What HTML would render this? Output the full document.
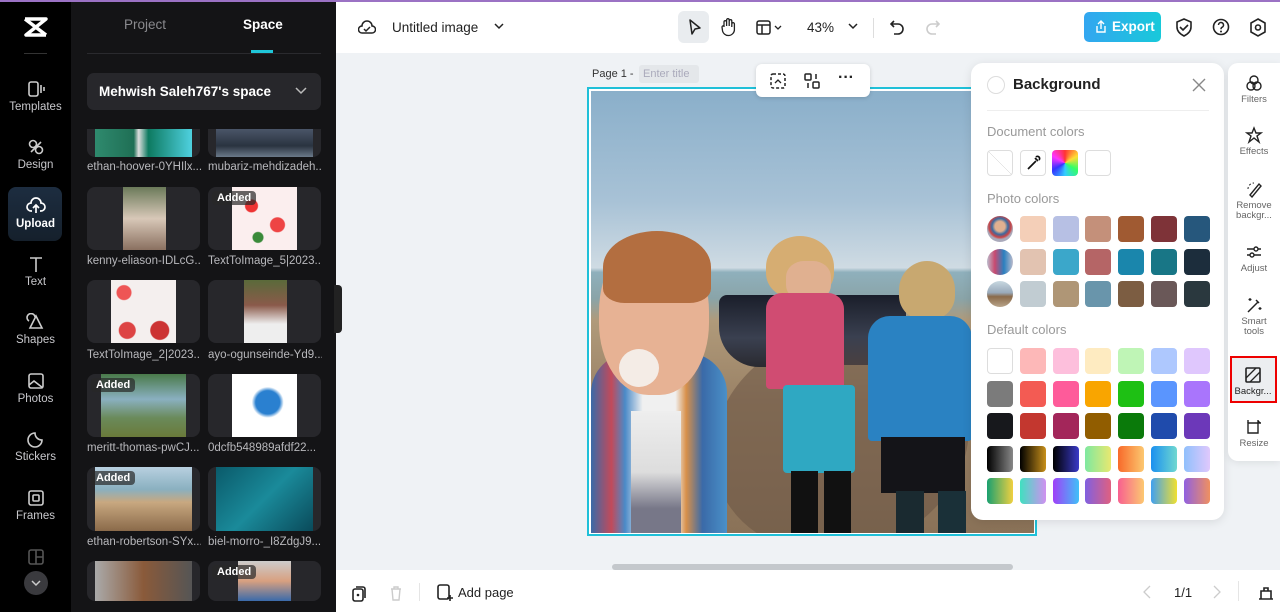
<!DOCTYPE html>
<html><head><meta charset="utf-8"><style>
*{box-sizing:border-box;margin:0;padding:0}
body{width:1280px;height:612px;overflow:hidden;font-family:"Liberation Sans",sans-serif;background:#eff2f5;position:relative}
.abs{position:absolute}
.rail{left:0;top:0;width:71px;height:612px;background:#000}
.ri{position:absolute;left:0;width:71px;text-align:center;color:#c8c8cc;font-size:11.5px}
.ri svg{display:block;margin:0 auto 3px}
.panel{left:71px;top:0;width:265px;height:612px;background:#141416}
.card{position:absolute;background:#27272b;border-radius:8px;overflow:hidden}
.card .im{position:absolute;top:0;bottom:0}
.lbl{position:absolute;color:#b8b8bc;font-size:11.5px;white-space:nowrap;width:114px;overflow:hidden}
.added{position:absolute;left:4px;top:4px;background:rgba(40,40,40,.7);color:#fff;font-weight:bold;font-size:11px;padding:1px 5px;border-radius:4px}
.top{left:336px;top:2px;width:944px;height:51px;background:#fff}
.sw{position:absolute;width:26px;height:26px;border-radius:4px}
.side{position:absolute;font-size:9.5px;color:#666;text-align:center;width:50px;left:1229px;line-height:10px}
.side svg{display:block;margin:0 auto 3px}
.p{position:absolute}
</style></head><body>
<div class="abs" style="left:0;top:0;width:1280px;height:2px;background:#9b72c4;z-index:5"></div>

<div class="abs rail">
 <svg class="abs" style="left:23px;top:17px" width="25" height="20" viewBox="0 0 25 20"><path d="M2 2h21L3 18h20" fill="none" stroke="#fff" stroke-width="3.5" stroke-linejoin="round"/><path d="M2 2l21 16" stroke="#fff" stroke-width="3.5"/></svg>
 <div class="abs" style="left:24px;top:53px;width:23px;height:1px;background:#333"></div>
 <div class="ri" style="top:80px"><svg width="20" height="18"><rect x="3" y="2" width="9" height="14" rx="2" fill="none" stroke="#ccc" stroke-width="1.6"/><path d="M15 5v8M18 7v4" stroke="#ccc" stroke-width="1.6"/></svg>Templates</div>
 <div class="ri" style="top:138px"><svg width="20" height="18"><circle cx="7" cy="6" r="3.5" fill="none" stroke="#ccc" stroke-width="1.6"/><circle cx="13" cy="12" r="3.5" fill="none" stroke="#ccc" stroke-width="1.6"/><path d="M5 14l10-10" stroke="#ccc" stroke-width="1.6"/></svg>Design</div>
 <div class="abs" style="left:8px;top:187px;width:54px;height:54px;border-radius:8px;background:linear-gradient(#1d2d40,#15202c)"></div>
 <div class="ri" style="top:197px;color:#fff;font-weight:bold"><svg width="20" height="18"><path d="M6 14H5a4 4 0 0 1 0-8 5 5 0 0 1 10 0 4 4 0 0 1 0 8h-1M10 16V9M7 11l3-3 3 3" fill="none" stroke="#fff" stroke-width="1.7"/></svg>Upload</div>
 <div class="ri" style="top:255px"><svg width="20" height="18"><path d="M4 3h12M10 3v14" stroke="#ccc" stroke-width="1.6"/></svg>Text</div>
 <div class="ri" style="top:313px"><svg width="20" height="18"><path d="M10 3l6 12H4z M3 8a4 4 0 1 1 6-4" fill="none" stroke="#ccc" stroke-width="1.6"/></svg>Shapes</div>
 <div class="ri" style="top:372px"><svg width="20" height="18"><rect x="3" y="2" width="14" height="14" rx="2" fill="none" stroke="#ccc" stroke-width="1.6"/><path d="M3 13l5-4 9 7" fill="none" stroke="#ccc" stroke-width="1.6"/></svg>Photos</div>
 <div class="ri" style="top:430px"><svg width="20" height="18"><path d="M16 10a7 7 0 1 1-7-7c0 4 3 7 7 7z" fill="none" stroke="#ccc" stroke-width="1.6"/></svg>Stickers</div>
 <div class="ri" style="top:489px"><svg width="20" height="18"><rect x="3" y="2" width="14" height="14" rx="2" fill="none" stroke="#ccc" stroke-width="1.6"/><rect x="7" y="6" width="6" height="6" rx="1" fill="none" stroke="#ccc" stroke-width="1.6"/></svg>Frames</div>
 <div class="ri" style="top:548px;color:#555"><svg width="20" height="18"><rect x="3" y="2" width="14" height="14" rx="2" fill="none" stroke="#555" stroke-width="1.6"/><path d="M10 2v14M10 9h7" stroke="#555" stroke-width="1.6"/></svg></div>
 <div class="abs" style="left:24px;top:571px;width:24px;height:24px;border-radius:50%;background:#3a3a3e;text-align:center"><svg width="12" height="24"><path d="M2 10l4 4 4-4" fill="none" stroke="#ccc" stroke-width="1.5"/></svg></div>
</div>

<div class="abs panel">
 <div class="abs" style="left:53px;top:17px;color:#8a8a8e;font-size:13.5px">Project</div>
 <div class="abs" style="left:172px;top:17px;color:#fff;font-size:13.5px;font-weight:bold">Space</div>
 <div class="abs" style="left:16px;top:53px;width:234px;height:1px;background:#2a2a2e"></div>
 <div class="abs" style="left:180px;top:50px;width:22px;height:3px;background:#1fc6d8"></div>
 <div class="abs" style="left:16px;top:73px;width:234px;height:37px;background:#27272b;border-radius:7px;color:#fff;font-weight:bold;font-size:13.5px;padding:11px 12px">Mehwish Saleh767's space<svg style="position:absolute;right:14px;top:14px" width="12" height="8"><path d="M1 1l5 5 5-5" fill="none" stroke="#bbb" stroke-width="1.5"/></svg></div>
</div>
<div class="card" style="left:87px;top:129px;width:113px;height:28px;border-radius:0 0 8px 8px"><div class="im" style="left:8px;width:97px;background:linear-gradient(90deg,#2f8a6e,#1f6f55 40%,#ddd 45%,#0d7a60 55%,#4fd1e0)"></div></div>
<div class="card" style="left:208px;top:129px;width:113px;height:28px;border-radius:0 0 8px 8px"><div class="im" style="left:8px;width:97px;background:linear-gradient(#4a5568,#2a3340 60%,#6b7a8a)"></div></div>
<div class="lbl" style="left:87px;top:161px">ethan-hoover-0YHIlx...</div>
<div class="lbl" style="left:208px;top:161px">mubariz-mehdizadeh...</div>
<div class="card" style="left:87px;top:187px;width:113px;height:63px"><div class="im" style="left:36px;width:43px;background:linear-gradient(#6b7a5a,#d8c8b8 50%,#8a7060)"></div></div>
<div class="card" style="left:208px;top:187px;width:113px;height:63px"><div class="im" style="left:24px;width:65px;background:radial-gradient(circle at 30% 30%,#e33 6px,transparent 7px),radial-gradient(circle at 70% 60%,#e44 7px,transparent 8px),radial-gradient(circle at 40% 80%,#3a8a3a 5px,transparent 6px),#fbeeee"></div><div class="added">Added</div></div>
<div class="lbl" style="left:87px;top:255px">kenny-eliason-IDLcG...</div>
<div class="lbl" style="left:208px;top:255px">TextToImage_5|2023...</div>
<div class="card" style="left:87px;top:280px;width:113px;height:63px"><div class="im" style="left:24px;width:65px;background:radial-gradient(circle at 20% 20%,#e55 7px,transparent 8px),radial-gradient(circle at 75% 80%,#c33 9px,transparent 10px),radial-gradient(circle at 25% 80%,#d44 8px,transparent 9px),#f4efee"></div></div>
<div class="card" style="left:208px;top:280px;width:113px;height:63px"><div class="im" style="left:36px;width:43px;background:linear-gradient(#5a6a3a,#8a5a4a 40%,#eee 70%)"></div></div>
<div class="lbl" style="left:87px;top:349px">TextToImage_2|2023...</div>
<div class="lbl" style="left:208px;top:349px">ayo-ogunseinde-Yd9...</div>
<div class="card" style="left:87px;top:374px;width:113px;height:63px"><div class="im" style="left:14px;width:85px;background:linear-gradient(#4a7a4a,#8ab0c0 40%,#6a8a5a 70%,#6a7a3a)"></div><div class="added">Added</div></div>
<div class="card" style="left:208px;top:374px;width:113px;height:63px"><div class="im" style="left:24px;width:65px;background:radial-gradient(ellipse at 55% 45%,#2a80d0 12px,transparent 16px),#fff"></div></div>
<div class="lbl" style="left:87px;top:442px">meritt-thomas-pwCJ...</div>
<div class="lbl" style="left:208px;top:442px">0dcfb548989afdf22...</div>
<div class="card" style="left:87px;top:467px;width:113px;height:64px"><div class="im" style="left:8px;width:97px;background:linear-gradient(#b8d0e0,#8ab0c0 35%,#c8a880 55%,#8a6a4a)"></div><div class="added">Added</div></div>
<div class="card" style="left:208px;top:467px;width:113px;height:64px"><div class="im" style="left:8px;width:97px;background:linear-gradient(135deg,#0a5a6a,#1a8a9a 50%,#0a4a5a)"></div></div>
<div class="lbl" style="left:87px;top:536px">ethan-robertson-SYx...</div>
<div class="lbl" style="left:208px;top:536px">biel-morro-_I8ZdgJ9...</div>
<div class="card" style="left:87px;top:561px;width:113px;height:40px"><div class="im" style="left:8px;width:97px;background:linear-gradient(90deg,#aaa,#8a5a3a 50%,#555)"></div></div>
<div class="card" style="left:208px;top:561px;width:113px;height:40px"><div class="im" style="left:30px;width:53px;background:linear-gradient(#ccc,#d8a080 50%,#3a6aaa)"></div><div class="added">Added</div></div>
<div class="abs" style="left:334px;top:285px;width:8px;height:48px;background:#222;border-radius:0 4px 4px 0"></div>

<div class="abs top">
 <svg class="abs" style="left:22px;top:17px" width="18" height="16"><path d="M4 14a3.5 3.5 0 0 1 0-7 5 5 0 0 1 10 0 3.5 3.5 0 0 1 0 7z" fill="none" stroke="#222" stroke-width="1.5"/><path d="M6 10l2 2 4-4" fill="none" stroke="#222" stroke-width="1.5"/></svg>
 <div class="abs" style="left:56px;top:18px;font-size:13.5px;color:#222">Untitled image</div>
 <svg class="abs" style="left:158px;top:21px" width="10" height="7"><path d="M1 1l4 4 4-4" fill="none" stroke="#222" stroke-width="1.5"/></svg>
 <div class="abs" style="left:342px;top:9px;width:31px;height:32px;background:#e9ecef;border-radius:6px"></div>
 <svg class="abs" style="left:349px;top:15px" width="18" height="20"><path d="M5 3l10 8-5 1-3 5z" fill="none" stroke="#222" stroke-width="1.5" stroke-linejoin="round"/></svg>
 <svg class="abs" style="left:383px;top:15px" width="18" height="20"><path d="M5 10V5a1.3 1.3 0 0 1 2.6 0v4V3a1.3 1.3 0 0 1 2.6 0v6V4a1.3 1.3 0 0 1 2.6 0v6V7a1.3 1.3 0 0 1 2.6 0v5a6 6 0 0 1-12 1L3 10a1.3 1.3 0 0 1 2-1z" fill="none" stroke="#222" stroke-width="1.3"/></svg>
 <svg class="abs" style="left:420px;top:18px" width="30" height="16"><rect x="1" y="1" width="13" height="13" rx="2" fill="none" stroke="#222" stroke-width="1.5"/><path d="M1 5h13M6 5v9" stroke="#222" stroke-width="1.5"/><path d="M19 6l3 3 3-3" fill="none" stroke="#222" stroke-width="1.3"/></svg>
 <div class="abs" style="left:471px;top:18px;font-size:13.5px;color:#222">43%</div>
 <svg class="abs" style="left:512px;top:21px" width="10" height="7"><path d="M1 1l4 4 4-4" fill="none" stroke="#222" stroke-width="1.5"/></svg>
 <div class="abs" style="left:537px;top:16px;width:1px;height:20px;background:#ddd"></div>
 <svg class="abs" style="left:554px;top:17px" width="16" height="17"><path d="M4 2L1 5l3 3M1 5h7a5 5 0 0 1 0 10H4" fill="none" stroke="#222" stroke-width="1.6"/></svg>
 <svg class="abs" style="left:588px;top:17px" width="16" height="17"><path d="M12 2l3 3-3 3M15 5H8a5 5 0 0 0 0 10h4" fill="none" stroke="#ccc" stroke-width="1.6"/></svg>
 <div class="abs" style="left:748px;top:10px;width:77px;height:30px;border-radius:5px;background:linear-gradient(90deg,#33a6f0,#18c9da);color:#fff;font-weight:bold;font-size:13.5px;padding:7px 0 0 28px">Export</div>
 <svg class="abs" style="left:758px;top:18px" width="14" height="14"><path d="M3 6v6h8V6M7 9V1M4 4l3-3 3 3" fill="none" stroke="#fff" stroke-width="1.4"/></svg>
 <svg class="abs" style="left:839px;top:16px" width="18" height="19"><path d="M9 1l7 3v5c0 4-3 7-7 9-4-2-7-5-7-9V4z M5 9l3 3 5-5" fill="none" stroke="#222" stroke-width="1.6"/></svg>
 <svg class="abs" style="left:876px;top:16px" width="18" height="18"><circle cx="9" cy="9" r="7.5" fill="none" stroke="#222" stroke-width="1.6"/><path d="M6.5 7a2.5 2.5 0 1 1 3.5 2.3c-1 .4-1 1-1 2" fill="none" stroke="#222" stroke-width="1.5"/><circle cx="9" cy="13.5" r="1" fill="#222"/></svg>
 <svg class="abs" style="left:913px;top:16px" width="18" height="19"><path d="M9 1l7 4v9l-7 4-7-4V5z" fill="none" stroke="#222" stroke-width="1.6"/><circle cx="9" cy="9.5" r="2.5" fill="none" stroke="#222" stroke-width="1.6"/></svg>
</div>

<div class="abs" style="left:592px;top:68px;font-size:11px;color:#333">Page 1 -</div>
<div class="abs" style="left:639px;top:65px;width:60px;height:18px;background:#e4e7ea;border-radius:3px;font-size:11px;color:#aab;padding:3px 4px">Enter title</div>
<div class="abs" style="left:587px;top:87px;width:450px;height:449px;border:2px solid #1fc0d8;background:#fff"></div>
<div class="abs" style="left:591px;top:91px;width:443px;height:442px;overflow:hidden;background:linear-gradient(#8aafca 0%,#a8c2d6 25%,#cfdbe3 40%,#8fb0bc 41%,#8aa4a8 47%,#b09a7a 52%,#9a8266 70%,#8a7258 100%)">
 <!-- sand path -->
 <div class="p" style="left:120px;top:240px;width:260px;height:220px;background:#6a5444;border-radius:50%;opacity:.55;transform:rotate(-20deg)"></div>
 <!-- sunglasses -->
 <div class="p" style="left:128px;top:204px;width:90px;height:72px;background:linear-gradient(#1a1e2a,#3a4050 60%,#2a2a30);border-radius:8px 8px 40px 40px"></div>
 <div class="p" style="left:215px;top:204px;width:100px;height:70px;background:linear-gradient(#1a1e2a,#3a4050 60%,#4a4040);border-radius:8px 8px 40px 40px"></div>
 <!-- girl -->
 <div class="p" style="left:175px;top:145px;width:68px;height:62px;background:#d6ad72;border-radius:50% 50% 40% 40%"></div>
 <div class="p" style="left:195px;top:170px;width:45px;height:40px;background:#e0b090;border-radius:40%"></div>
 <div class="p" style="left:175px;top:202px;width:78px;height:96px;background:#d04c72;border-radius:16px 16px 4px 4px"></div>
 <div class="p" style="left:192px;top:294px;width:72px;height:88px;background:#2fa8c2;border-radius:4px"></div>
 <div class="p" style="left:200px;top:380px;width:60px;height:62px;background:linear-gradient(90deg,#111 45%,transparent 45% 55%,#111 55%)"></div>
 <!-- boy right -->
 <div class="p" style="left:308px;top:170px;width:56px;height:58px;background:#c8a870;border-radius:50% 50% 40% 40%"></div>
 <div class="p" style="left:277px;top:225px;width:104px;height:125px;background:#2a82c2;border-radius:22px 22px 4px 4px"></div>
 <div class="p" style="left:290px;top:346px;width:84px;height:56px;background:#141418"></div>
 <div class="p" style="left:305px;top:400px;width:70px;height:42px;background:linear-gradient(90deg,#1a2a30 40%,transparent 40% 60%,#1a3038 60%)"></div>
 <!-- boy left -->
 <div class="p" style="left:0;top:262px;width:136px;height:180px;background:linear-gradient(90deg,#3a6aa8,#c24a5a 15%,#4a8ac8 25%,#f0f0f0 38% 62%,#d8904a 70%,#3a6aa8 82%,#4a90c8);border-radius:40px 40px 0 0"></div>
 <div class="p" style="left:40px;top:320px;width:50px;height:122px;background:linear-gradient(#eee,#ddd 50%,#778 80%)"></div>
 <div class="p" style="left:8px;top:144px;width:110px;height:160px;background:#e7b294;border-radius:48% 48% 45% 45%"></div>
 <div class="p" style="left:12px;top:140px;width:108px;height:72px;background:#b36e40;border-radius:50% 50% 20% 20%"></div>
 <div class="p" style="left:28px;top:258px;width:40px;height:38px;background:#f4ece6;border-radius:50%"></div>
</div>
<div class="abs" style="left:756px;top:64px;width:114px;height:33px;background:#fff;border-radius:6px;box-shadow:0 1px 4px rgba(0,0,0,.15)">
 <svg class="abs" style="left:13px;top:8px" width="18" height="18"><rect x="2" y="2" width="14" height="14" rx="2" fill="none" stroke="#222" stroke-width="1.5" stroke-dasharray="3 2"/><path d="M6 11l3-3 3 3" fill="none" stroke="#222" stroke-width="1.3"/></svg>
 <svg class="abs" style="left:47px;top:8px" width="18" height="18"><rect x="2" y="2" width="6" height="6" rx="1" fill="none" stroke="#222" stroke-width="1.5"/><rect x="10" y="10" width="6" height="6" rx="1" fill="none" stroke="#222" stroke-width="1.5"/><path d="M13 2v5M5 11v5" stroke="#222" stroke-width="1.5"/></svg>
 <div class="abs" style="left:82px;top:5px;font-size:16px;font-weight:bold;color:#222">···</div>
</div>
<div class="abs" style="left:612px;top:564px;width:401px;height:6px;background:#c4c8cc;border-radius:3px"></div>

<div class="abs" style="left:971px;top:63px;width:253px;height:457px;background:#fff;border-radius:12px;box-shadow:0 2px 10px rgba(0,0,0,.1)">
 <div class="abs" style="left:16px;top:13px;width:18px;height:18px;border-radius:50%;border:1px solid #ddd"></div>
 <div class="abs" style="left:42px;top:13px;font-size:15px;font-weight:bold;color:#222">Background</div>
 <svg class="abs" style="left:221px;top:15px" width="14" height="14"><path d="M1 1l12 12M13 1L1 13" stroke="#888" stroke-width="1.4"/></svg>
 <div class="abs" style="left:16px;top:47px;width:222px;height:1px;background:#eee"></div>
 <div class="abs" style="left:16px;top:61px;font-size:13px;color:#999">Document colors</div>
 <div class="abs" style="left:16px;top:128px;font-size:13px;color:#999">Photo colors</div>
 <div class="abs" style="left:16px;top:259px;font-size:13px;color:#999">Default colors</div>
</div>
<div class="sw" style="left:987px;top:150px;border:1px solid #ddd;background:linear-gradient(45deg,#fff 49%,#ccc 50%,#fff 51%)"></div>
<div class="sw" style="left:1020px;top:150px;border:1px solid #ddd;background:#fff"><svg width="24" height="24"><path d="M7 18l8-8M14 7l3 3M15 6a2 2 0 0 1 3 3" fill="none" stroke="#111" stroke-width="1.7"/></svg></div>
<div class="sw" style="left:1052px;top:150px;background:conic-gradient(#f33,#fd3,#3f6,#3cf,#33f,#f3f,#f33)"></div>
<div class="sw" style="left:1085px;top:150px;border:1px solid #ddd;background:#fff"></div>
<div class="sw" style="left:987px;top:216px;border-radius:50%;background:radial-gradient(circle at 50% 40%,#e0b090 5px,#3a6aa0 8px,#c44 11px,#aab 13px)"></div>
<div class="sw" style="left:987px;top:249px;border-radius:50%;background:linear-gradient(90deg,#bbc,#c84a70 30%,#2a80c0 65%,#bbc)"></div>
<div class="sw" style="left:987px;top:281px;border-radius:50%;background:linear-gradient(#c8d8e0,#9ab 45%,#8a6a4a 60%,#b8a48a)"></div>
<div id="sws"></div>
<script>
var rows=[[216,["#f4cfb8","#b7c0e4","#c4907a","#a05a32","#7e3338","#26577c"]],[249,["#e2c3b1","#3ba7ca","#b56566","#1a86ac","#187686","#1c2d3c"]],[281,["#c1ccd2","#af9676","#6995ab","#7c5d42","#6a5858","#2a383e"]],
[348,["#ffffff","#fdb8b8","#fdbfdc","#feebc1","#bff5b6","#aec8fe","#dfc7fd"]],[381,["#7b7b7b","#f35b53","#fe5b9a","#f9a500","#1ec014","#5a95fe","#a975fc"]],[413,["#17181c","#c3372f","#a3265a","#915d00","#0a7a0a","#1f4bac","#6c38b9"]],
[446,["linear-gradient(90deg,#000,#888)","linear-gradient(90deg,#000,#c8901a)","linear-gradient(90deg,#000,#3a3ac8)","linear-gradient(90deg,#7ee8a0,#e8e870)","linear-gradient(90deg,#f86a2a,#fcc870)","linear-gradient(90deg,#1a90f0,#70d8d0)","linear-gradient(90deg,#90c0fc,#e0c8fc)"]],
[478,["linear-gradient(90deg,#1aa070,#f0d040)","linear-gradient(90deg,#40e0c0,#d090f0)","linear-gradient(90deg,#a040f8,#40c0f8)","linear-gradient(90deg,#8060e0,#e06080)","linear-gradient(90deg,#f86090,#fcc870)","linear-gradient(90deg,#40a0f0,#f0e030)","linear-gradient(90deg,#9060e0,#f09060)"]]];
var h="";rows.forEach(function(r){var off=r[1].length==6?1:0;r[1].forEach(function(c,i){var x=987+(i+off)*32.8;h+='<div class="sw" style="left:'+x+'px;top:'+r[0]+'px;background:'+c+(c=="#ffffff"?';border:1px solid #ddd':'')+'"></div>';});});
document.getElementById("sws").innerHTML=h;
</script>

<div class="abs" style="left:1228px;top:63px;width:52px;height:398px;background:#fff;border-radius:10px 0 0 10px;box-shadow:0 2px 8px rgba(0,0,0,.08)"></div>
<div class="side" style="top:74px"><svg width="18" height="18"><circle cx="9" cy="6" r="4" fill="none" stroke="#222" stroke-width="1.4"/><circle cx="6" cy="12" r="4" fill="none" stroke="#222" stroke-width="1.4"/><circle cx="12" cy="12" r="4" fill="none" stroke="#222" stroke-width="1.4"/></svg>Filters</div>
<div class="side" style="top:126px"><svg width="18" height="18"><path d="M9 2l2 5h5l-4 3 2 6-5-4-5 4 2-6-4-3h5z" fill="none" stroke="#222" stroke-width="1.4"/></svg>Effects</div>
<div class="side" style="top:180px"><svg width="18" height="18"><path d="M5 15l9-11 2 2-9 11z" fill="none" stroke="#222" stroke-width="1.4"/><path d="M3 9a6 6 0 0 1 6-6" fill="none" stroke="#222" stroke-dasharray="2 2"/></svg>Remove<br>backgr...</div>
<div class="side" style="top:243px"><svg width="18" height="18"><path d="M2 6h14M2 12h14" stroke="#222" stroke-width="1.4"/><circle cx="11" cy="6" r="2" fill="#fff" stroke="#222" stroke-width="1.4"/><circle cx="7" cy="12" r="2" fill="#fff" stroke="#222" stroke-width="1.4"/></svg>Adjust</div>
<div class="side" style="top:296px"><svg width="18" height="18"><path d="M3 16L13 6M11 4l3 3" stroke="#222" stroke-width="1.5"/><path d="M5 2v3M3.5 3.5h3M15 11v3M13.5 12.5h3" stroke="#222" stroke-width="1.2"/></svg>Smart<br>tools</div>
<div class="abs" style="left:1230px;top:356px;width:47px;height:47px;border:2px solid #e00;background:#eceef0"></div>
<div class="side" style="top:366px;left:1228px;color:#222"><svg width="18" height="18"><rect x="2" y="2" width="14" height="14" rx="1" fill="none" stroke="#222" stroke-width="1.6"/><path d="M2 12L12 2M6 16L16 6" stroke="#222" stroke-width="1.3"/></svg>Backgr...</div>
<div class="side" style="top:418px"><svg width="18" height="18"><path d="M3 5h10v10H3z" fill="none" stroke="#222" stroke-width="1.4"/><path d="M13 2v3h3M3 2v3" stroke="#222" stroke-width="1.4"/></svg>Resize</div>

<div class="abs" style="left:336px;top:570px;width:944px;height:42px;background:#fff">
 <svg class="abs" style="left:15px;top:14px" width="16" height="18"><rect x="2" y="5" width="10" height="12" rx="2" fill="none" stroke="#222" stroke-width="1.6"/><path d="M5 3h7a2 2 0 0 1 2 2v9" fill="none" stroke="#222" stroke-width="1.6"/><circle cx="7" cy="11" r="1.3" fill="#222"/></svg>
 <svg class="abs" style="left:53px;top:14px" width="14" height="18"><path d="M2 5h10M5 5V3h4v2M3 5l1 11h6l1-11" fill="none" stroke="#ccc" stroke-width="1.4"/></svg>
 <div class="abs" style="left:83px;top:13px;width:1px;height:18px;background:#e5e5e5"></div>
 <svg class="abs" style="left:100px;top:13px" width="18" height="19"><rect x="2" y="2" width="11" height="14" rx="2" fill="none" stroke="#222" stroke-width="1.6"/><path d="M14 12v6M11 15h6" stroke="#222" stroke-width="1.6"/></svg>
 <div class="abs" style="left:122px;top:15px;font-size:13px;color:#222">Add page</div>
 <svg class="abs" style="left:806px;top:15px" width="10" height="14"><path d="M8 1L2 7l6 6" fill="none" stroke="#ccc" stroke-width="1.3"/></svg>
 <div class="abs" style="left:838px;top:15px;font-size:13px;color:#222">1/1</div>
 <svg class="abs" style="left:876px;top:15px" width="10" height="14"><path d="M2 1l6 6-6 6" fill="none" stroke="#ccc" stroke-width="1.3"/></svg>
 <div class="abs" style="left:902px;top:11px;width:1px;height:20px;background:#e5e5e5"></div>
 <svg class="abs" style="left:921px;top:13px" width="18" height="18"><path d="M4 8h10v8H4zM2 16h14M7 8V5h4v3" fill="none" stroke="#222" stroke-width="1.6"/></svg>
</div>
</body></html>
